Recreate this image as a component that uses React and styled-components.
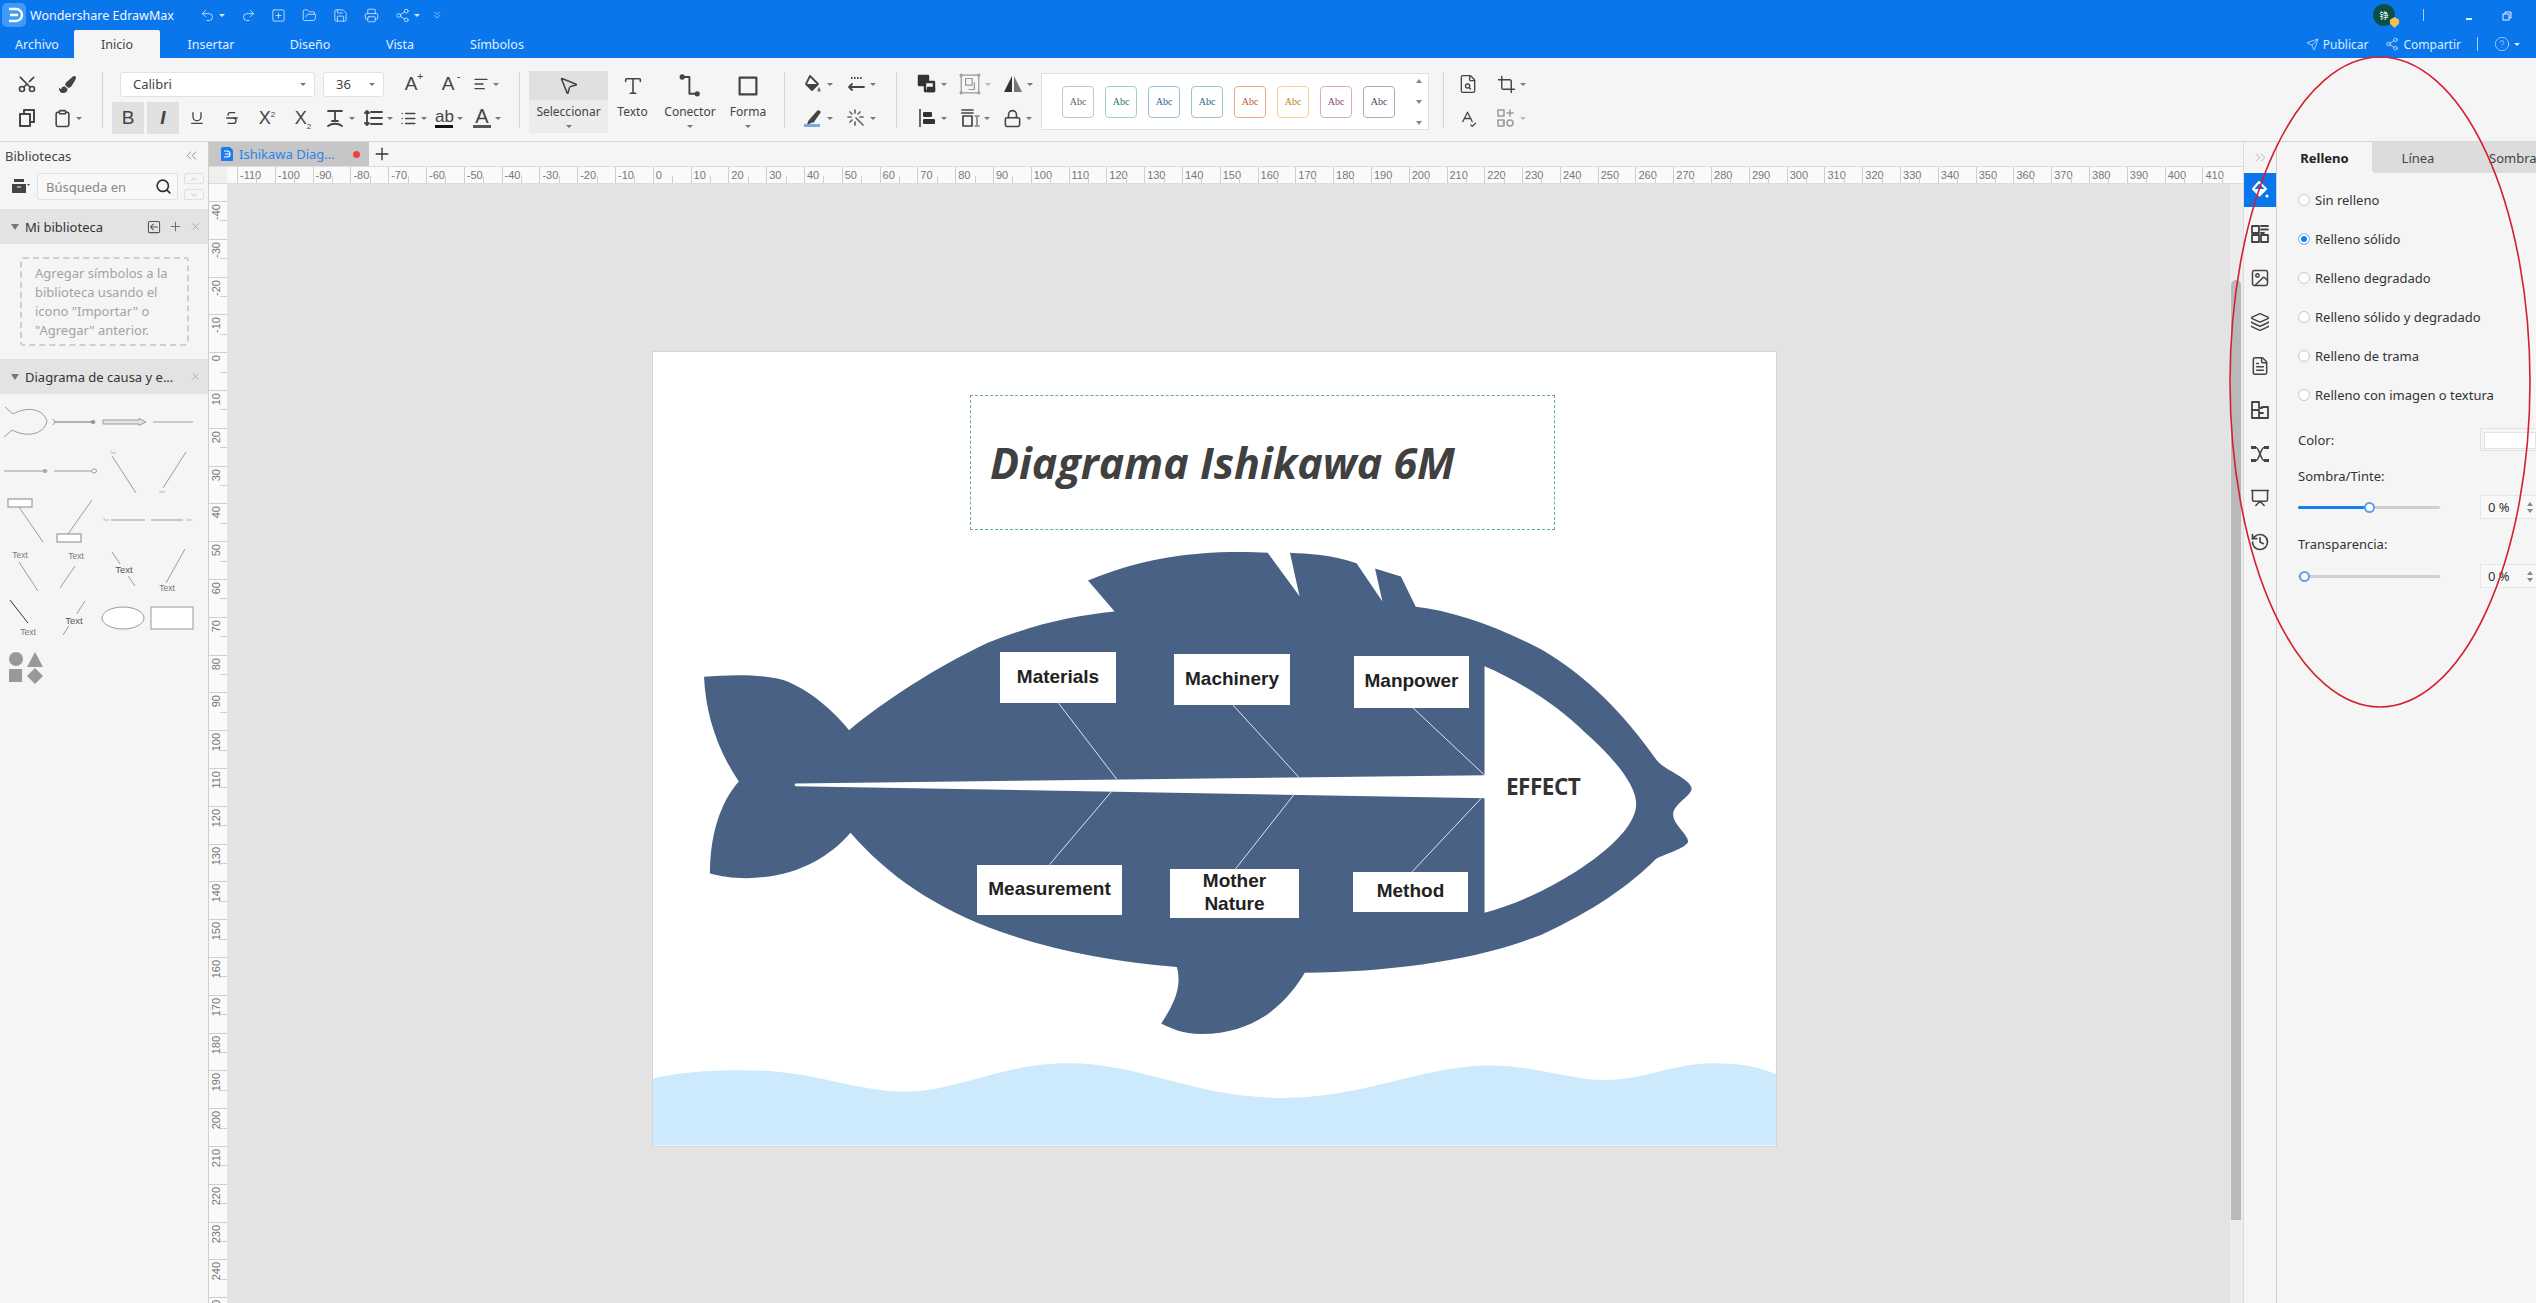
import React from "react";
import styled, { createGlobalStyle } from "styled-components";
import {
  Undo2, Redo2, SquarePlus, FolderOpen, Save, Printer, Send, Share2, CircleHelp,
  Scissors, Clipboard, AlignLeft, Underline, Strikethrough, List, MousePointer2, Type,
  Lock, FileSearch, Crop, SpellCheck, Search, ChevronUp, ChevronDown, Plus, X,
  ChevronsLeft, ChevronsRight, Image, Layers, FileText, Presentation, History, ChevronsDown,
} from "lucide-react";
import { FaPaintBrush } from "react-icons/fa";

const UI_FONT = `"Noto Sans", "Open Sans", sans-serif`;
const UNIT = 37.8; // ruler px for 10 units

const GlobalStyle = createGlobalStyle`
  html, body { margin: 0; padding: 0; height: 100%; overflow: hidden; }
  body { font-family: ${UI_FONT}; color: #333; background: #f5f5f5; }
  * { box-sizing: border-box; }
`;

const Shell = styled.div`
  position: relative;
  display: flex;
  flex-direction: column;
  width: 2536px;
  height: 1303px;
  overflow: hidden;
`;

/* ---- title bar ---- */
const TitleBar = styled.header`
  height: 58px;
  flex: none;
  background: #0a76ec;
  color: #fff;
  display: flex;
  flex-direction: column;
`;
const TitleRow = styled.div`
  height: 30px;
  display: flex;
  align-items: center;
`;
const AppLogo = styled.svg`
  width: 24px;
  height: 24px;
  margin-left: 2px;
`;
const AppName = styled.span`
  font-size: 12.5px;
  margin-left: 4px;
  width: 170px;
  color: #f2f7ff;
`;
const QuickIcons = styled.div`
  display: flex;
  align-items: center;
`;
const QuickBtn = styled.span`
  width: ${(p) => p.$w || 31}px;
  display: flex;
  align-items: center;
  justify-content: flex-start;
  gap: 4px;
  color: #d9e9fd;
`;
const CaretDown = styled.i`
  display: inline-block;
  flex: none;
  width: 0;
  height: 0;
  border-left: 3px solid transparent;
  border-right: 3px solid transparent;
  border-top: 3px solid ${(p) => p.$color || "#777"};
`;
const WindowArea = styled.div`
  margin-left: auto;
  display: flex;
  align-items: center;
`;
const AvatarWrap = styled.div`
  position: relative;
  width: 22px;
  height: 22px;
  border-radius: 50%;
  background: #0c4f45;
  font: 9px "Noto Sans CJK SC", sans-serif;
  display: flex;
  align-items: center;
  justify-content: center;
  margin-right: 28px;
`;
const AvatarBadge = styled.svg`
  position: absolute;
  right: -5px;
  bottom: -2px;
  width: 11px;
  height: 11px;
`;
const TitleDivider = styled.span`
  width: 1px;
  height: ${(p) => p.$h || 12}px;
  background: #a9cdf8;
`;
const WinBtn = styled.span`
  display: block;
  margin-left: ${(p) => p.$ml}px;
  margin-right: ${(p) => p.$mr || 0}px;
  color: #e6f1ff;
`;
const MenuRow = styled.div`
  height: 28px;
  display: flex;
  align-items: stretch;
`;
const MenuTab = styled.div`
  width: ${(p) => p.$w}px;
  display: flex;
  align-items: center;
  justify-content: center;
  font-size: 12.5px;
  border-radius: 2px 2px 0 0;
  color: ${(p) => (p.$active ? "#444" : "#e2eefd")};
  background: ${(p) => (p.$active ? "#f5f5f5" : "transparent")};
`;
const ShareArea = styled.div`
  margin-left: auto;
  display: flex;
  align-items: center;
  font-size: 12px;
  color: #dcebfd;
  padding-right: 16px;
`;
const ShareLink = styled.span`
  display: flex;
  align-items: center;
  gap: 4px;
  margin-right: ${(p) => p.$mr}px;
  margin-left: ${(p) => p.$ml || 0}px;
`;

/* ---- ribbon ---- */
const Ribbon = styled.section`
  height: 84px;
  flex: none;
  background: #f5f5f5;
  border-bottom: 1px solid #d6d6d6;
  display: flex;
  align-items: flex-start;
  padding: 9px 0 0 7px;
`;
const Divider = styled.span`
  flex: none;
  width: 1px;
  height: 56px;
  margin: 5px ${(p) => p.$r}px 0 ${(p) => p.$l}px;
  background: #d4d4d4;
`;
const ToolGrid = styled.div`
  display: grid;
  flex: none;
  grid-template-columns: ${(p) => p.$cols};
  grid-auto-rows: 34px;
`;
const Tool = styled.span`
  display: flex;
  align-items: center;
  justify-content: center;
  gap: 4px;
  height: 34px;
  width: ${(p) => (p.$w ? `${p.$w}px` : "auto")};
  flex: none;
  color: ${(p) => (p.$muted ? "#9a9a9a" : "#444")};
  font-size: 15px;
`;
const CutIcon = styled(Scissors)`
  transform: rotate(-90deg);
`;
const FontColumn = styled.div`
  width: 393px;
  flex: none;
  display: flex;
  flex-direction: column;
`;
const FontRow = styled.div`
  display: flex;
  align-items: center;
  height: 34px;
  padding-left: ${(p) => p.$pl || 0}px;
`;
const SelectBox = styled.div`
  width: ${(p) => p.$w}px;
  height: 25px;
  margin-right: 8px;
  background: #fff;
  border: 1px solid #e2e2e2;
  border-radius: 3px;
  font-size: 13px;
  color: #444;
  display: flex;
  align-items: center;
  justify-content: space-between;
  padding: 0 ${(p) => p.$pr || 8}px 0 12px;
`;
const ToggleBtn = styled.span`
  width: 32px;
  height: 32px;
  margin-right: ${(p) => p.$mr || 0}px;
  flex: none;
  background: #e0e0e0;
  display: flex;
  align-items: center;
  justify-content: center;
  color: #444;
  font: ${(p) => (p.$italic ? "italic" : "normal")} ${(p) => (p.$italic ? 700 : 400)} 19px "Liberation Sans", sans-serif;
`;
const SizeGlyph = styled.span`
  font: 400 19px "Liberation Sans", sans-serif;
  color: #444;
  position: relative;
`;
const SmallMark = styled.small`
  position: absolute;
  top: -3px;
  right: -6px;
  font-size: 11px;
`;
const ScriptX = styled.span`
  font: 400 18px "Liberation Sans", sans-serif;
  color: #444;
  & > sup, & > sub { font-size: 8px; line-height: 0; }
`;
const UnderGlyph = styled.span`
  font: 400 ${(p) => p.$size}px "Liberation Sans", sans-serif;
  line-height: 17px;
  color: #444;
  border-bottom: 3px solid ${(p) => p.$bar};
  display: block;
  width: 18px;
  text-align: center;
`;
const BigTools = styled.div`
  display: flex;
  flex: none;
  margin-top: 4px;
`;
const BigTool = styled.div`
  width: ${(p) => p.$w}px;
  height: 62px;
  display: flex;
  flex-direction: column;
  align-items: center;
  font-size: 12px;
  color: #444;
  background: ${(p) => (p.$active ? "#ececec" : "transparent")};
`;
const BigIcon = styled.span`
  width: 100%;
  height: 29px;
  display: flex;
  align-items: center;
  justify-content: center;
  background: ${(p) => (p.$active ? "#e0e0e0" : "transparent")};
`;
const BigLabel = styled.span`
  margin-top: 3px;
  line-height: 18px;
  margin-bottom: 4px;
`;
const StyleBox = styled.div`
  flex: none;
  width: 388px;
  height: 57px;
  margin: 6px 0 0 2px;
  background: #fff;
  border: 1px solid #e0e0e0;
  display: flex;
  align-items: center;
  padding-left: 20px;
  gap: 11px;
  position: relative;
`;
const StyleCard = styled.span`
  width: 32px;
  height: 32px;
  border: 1px solid ${(p) => p.$line};
  border-radius: 4px;
  display: flex;
  align-items: center;
  justify-content: center;
  font: 10px "Liberation Serif", serif;
  color: ${(p) => p.$ink};
`;
const StyleArrows = styled.span`
  position: absolute;
  right: 6px;
  top: 5px;
  bottom: 4px;
  display: flex;
  flex-direction: column;
  justify-content: space-between;
  align-items: center;
`;

/* ---- body ---- */
const Body = styled.div`
  flex: 1;
  display: flex;
  min-height: 0;
`;
const Library = styled.aside`
  width: 209px;
  flex: none;
  background: #f5f5f5;
  border-right: 1px solid #cfcfcf;
  display: flex;
  flex-direction: column;
`;
const LibTitle = styled.div`
  height: 27px;
  padding: 0 8px 0 5px;
  font-size: 13px;
  color: #444;
  display: flex;
  align-items: center;
  justify-content: space-between;
`;
const SearchRow = styled.div`
  display: flex;
  align-items: flex-start;
  height: 40px;
  padding: 4px 0 0 12px;
`;
const Cabinet = styled.svg`
  width: 18px;
  height: 16px;
  margin-top: 5px;
`;
const SearchBox = styled.div`
  width: 141px;
  height: 27px;
  margin-left: 7px;
  background: #f8f8f8;
  border: 1px solid #e2e2e2;
  border-radius: 2px;
  font-size: 13px;
  color: #888;
  display: flex;
  align-items: center;
  justify-content: space-between;
  padding: 0 5px 0 8px;
`;
const Steppers = styled.div`
  margin-left: 6px;
  display: flex;
  flex-direction: column;
  gap: 5px;
`;
const StepBtn = styled.span`
  width: 20px;
  height: 11px;
  border: 1px solid #e0e0e0;
  border-radius: 2px;
  color: #888;
  display: flex;
  align-items: center;
  justify-content: center;
`;
const LibHeader = styled.div`
  height: 35px;
  flex: none;
  background: #e3e3e3;
  display: flex;
  align-items: center;
  padding: 0 7px 0 11px;
  font-size: 13px;
  color: #333;
`;
const SectionCaret = styled.i`
  flex: none;
  width: 0;
  height: 0;
  border-left: 4px solid transparent;
  border-right: 4px solid transparent;
  border-top: 6px solid #777;
`;
const HeaderText = styled.span`
  margin-left: 6px;
  flex: 1;
  white-space: nowrap;
`;
const HeaderIcons = styled.span`
  display: flex;
  align-items: center;
  gap: 7px;
  color: #555;
`;
const DashedNote = styled.div`
  width: 169px;
  height: 89px;
  margin: 13px 0 13px 20px;
  border: 2px dashed #cfcfcf;
  border-radius: 3px;
  padding: 5px 0 0 13px;
  font-size: 13px;
  line-height: 19px;
  color: #a3a3a3;
`;
const ThumbGrid = styled.div`
  display: grid;
  grid-template-columns: repeat(4, 49px);
  grid-auto-rows: 49px;
  padding: 4px 0 0 3px;
`;
const Thumb = styled.svg`
  width: 49px;
  height: 49px;
  overflow: visible;
`;

const Workspace = styled.main`
  flex: 1;
  min-width: 0;
  display: flex;
  flex-direction: column;
`;
const DocTabs = styled.div`
  height: 25px;
  flex: none;
  display: flex;
  align-items: center;
  border-bottom: 1px solid #dcdcdc;
`;
const DocTab = styled.div`
  width: 160px;
  height: 24px;
  background: #c6c6c6;
  display: flex;
  align-items: center;
  padding-left: 12px;
  font-size: 13px;
  color: #2b84e6;
  gap: 6px;
`;
const DirtyDot = styled.span`
  width: 7px;
  height: 7px;
  border-radius: 50%;
  margin-left: 12px;
  background: #ec4141;
`;
const AddTab = styled.span`
  margin-left: 3px;
  display: flex;
  color: #333;
`;
const RulerRow = styled.div`
  height: 17px;
  flex: none;
  display: flex;
`;
const RulerCorner = styled.div`
  width: 18px;
  flex: none;
  background: #efefef;
  border-bottom: 1px solid #dcdcdc;
`;
const HRuler = styled.div`
  flex: 1;
  min-width: 0;
  display: flex;
  overflow: hidden;
  padding-left: 10px;
  background: #fafafa;
  border-bottom: 1px solid #dcdcdc;
`;
const HTick = styled.span`
  position: relative;
  flex: none;
  width: ${UNIT}px;
  border-left: 1px solid #cfcfcf;
  padding-left: 2px;
  font: 11px/16px "Liberation Sans", sans-serif;
  color: #777;
  &::after {
    content: "";
    position: absolute;
    left: 50%;
    bottom: 0;
    height: 7px;
    border-left: 1px solid #cfcfcf;
  }
`;
const CanvasRow = styled.div`
  flex: 1;
  min-height: 0;
  display: flex;
`;
const VRuler = styled.div`
  width: 18px;
  flex: none;
  display: flex;
  flex-direction: column;
  overflow: hidden;
  padding-top: 17px;
  background: #fafafa;
`;
const VTick = styled.span`
  position: relative;
  flex: none;
  height: ${UNIT}px;
  border-top: 1px solid #cfcfcf;
  &::after {
    content: "";
    position: absolute;
    right: 0;
    top: 50%;
    width: 7px;
    border-top: 1px solid #cfcfcf;
  }
`;
const VTickText = styled.span`
  position: absolute;
  left: 1px;
  top: 2px;
  writing-mode: vertical-rl;
  transform: rotate(180deg);
  font: 11px/12px "Liberation Sans", sans-serif;
  color: #777;
`;
const Canvas = styled.div`
  flex: 1;
  min-width: 0;
  background: #e3e3e3;
  padding: 168px 0 0 426px;
  overflow: hidden;
`;
const Sheet = styled.div`
  position: relative;
  width: 1123px;
  height: 794px;
  background: #fff;
  box-shadow: 0 0 0 1px #d6d6d6;
`;
const SheetArt = styled.svg`
  position: absolute;
  inset: 0;
  width: 100%;
  height: 100%;
`;
const TitleFrame = styled.div`
  position: absolute;
  left: 317px;
  top: 43px;
  width: 585px;
  height: 135px;
  border: 1px dashed #62a6b8;
  display: flex;
  align-items: center;
  padding: 0 0 1px 19px;
  font: italic 700 43px "Open Sans", sans-serif;
  color: #404040;
  white-space: nowrap;
`;
const CauseBox = styled.div`
  position: absolute;
  left: ${(p) => p.$x}px;
  top: ${(p) => p.$y}px;
  width: ${(p) => p.$w}px;
  height: ${(p) => p.$h}px;
  background: #fff;
  display: flex;
  align-items: center;
  justify-content: center;
  text-align: center;
  font: 700 19px/23px "Liberation Sans", sans-serif;
  color: #222;
  padding-bottom: 3px;
`;
const EffectLabel = styled.div`
  position: absolute;
  left: 853px;
  top: 421px;
  font: 700 22.5px/28px "Open Sans", sans-serif;
  color: #333;
  letter-spacing: -0.5px;
`;
const ScrollTrack = styled.div`
  width: 13px;
  flex: none;
  background: #ececec;
  padding: 96px 2px 83px 1px;
  display: flex;
`;
const ScrollThumb = styled.div`
  flex: 1;
  background: #b9b9b9;
  border-radius: 5px 5px 0 0;
`;

/* ---- right side ---- */
const IconStrip = styled.nav`
  width: 34px;
  flex: none;
  background: #f5f5f5;
  border-right: 1px solid #cfcfcf;
  border-left: 1px solid #dcdcdc;
  display: flex;
  flex-direction: column;
  align-items: center;
`;
const StripTop = styled.div`
  height: 31px;
  display: flex;
  align-items: center;
  color: #999;
`;
const StripBtn = styled.span`
  width: 100%;
  height: ${(p) => (p.$active ? 34 : 44)}px;
  margin-bottom: ${(p) => (p.$active ? 5 : 0)}px;
  display: flex;
  align-items: center;
  justify-content: center;
  background: ${(p) => (p.$active ? "#0a76ec" : "transparent")};
  color: ${(p) => (p.$active ? "#fff" : "#444")};
`;
const Props = styled.aside`
  width: 259px;
  flex: none;
  background: #f5f5f5;
  overflow: hidden;
`;
const PropTabs = styled.div`
  display: flex;
  height: 31px;
`;
const PropTab = styled.div`
  flex: none;
  width: ${(p) => p.$w}px;
  padding-left: ${(p) => p.$pl || 0}px;
  font-size: 13px;
  font-weight: ${(p) => (p.$active ? 700 : 400)};
  color: ${(p) => (p.$active ? "#222" : "#444")};
  background: ${(p) => (p.$active ? "#f5f5f5" : "#dcdcdc")};
  border-bottom-left-radius: ${(p) => (p.$first ? 4 : 0)}px;
  display: flex;
  align-items: center;
  justify-content: ${(p) => (p.$pl ? "flex-start" : "center")};
  overflow: hidden;
`;
const FillList = styled.div`
  display: flex;
  flex-direction: column;
  padding: 7px 0 0 21px;
`;
const FillOption = styled.div`
  height: 39px;
  display: flex;
  align-items: center;
  gap: 5px;
  font-size: 13px;
  color: #333;
`;
const Radio = styled.span`
  width: 12px;
  height: 12px;
  border-radius: 50%;
  flex: none;
  background: ${(p) => (p.$on ? "#1b7ef0" : "#fff")};
  border: 1px solid ${(p) => (p.$on ? "#9cc8f8" : "#c8c8c8")};
  box-shadow: ${(p) => (p.$on ? "inset 0 0 0 2px #fff" : "none")};
`;
const FieldRow = styled.div`
  display: flex;
  align-items: center;
  height: ${(p) => p.$h}px;
  margin-top: ${(p) => p.$mt || 0}px;
  padding-left: 21px;
  font-size: 13px;
  color: #333;
`;
const ColorWell = styled.div`
  margin-left: auto;
  width: 56px;
  height: 23px;
  flex: none;
  border: 1px solid #e2e2e2;
  border-right: 0;
  padding: 3px 0 3px 3px;
  border-radius: 2px;
  &::after {
    content: "";
    display: block;
    height: 100%;
    background: #fff;
    border: 1px solid #e2e2e2;
  }
`;
const SliderTrack = styled.div`
  position: relative;
  width: 142px;
  height: 3px;
  background: #cfcfcf;
  border-radius: 2px;
`;
const SliderFill = styled.div`
  width: ${(p) => p.$at}px;
  height: 100%;
  background: #1b7ef0;
  border-radius: 2px;
`;
const SliderThumb = styled.span`
  position: absolute;
  left: ${(p) => p.$at}px;
  top: -4px;
  width: 11px;
  height: 11px;
  margin-left: -5px;
  border-radius: 50%;
  background: #fff;
  border: 2px solid #5aa2f3;
`;
const PercentBox = styled.div`
  margin-left: 40px;
  width: 56px;
  height: 24px;
  flex: none;
  border: 1px solid #e6e6e6;
  border-right: 0;
  font-size: 13px;
  padding-left: 7px;
  display: flex;
  align-items: center;
  gap: 17px;
  background: #f8f8f8;
`;
const Spinner = styled.span`
  display: flex;
  flex-direction: column;
  gap: 3px;
`;
const SpinUp = styled.i`
  display: block;
  width: 0;
  height: 0;
  border-left: 3px solid transparent;
  border-right: 3px solid transparent;
  border-bottom: 4px solid #888;
`;
const SpinDown = styled(SpinUp)`
  transform: rotate(180deg);
`;
const Annotation = styled.svg`
  position: absolute;
  left: 2225px;
  top: 52px;
  width: 311px;
  height: 662px;
  pointer-events: none;
`;

const Ico = ({ children, size = 20, sw = 2, color = "#444", fill = "none" }) => (
  <svg width={size} height={size} viewBox="0 0 20 20" fill={fill} stroke={color} strokeWidth={sw} strokeLinecap="round" strokeLinejoin="round">
    {children}
  </svg>
);

const CopyIcon = () => (
  <Ico size={20}>
    <rect x="3" y="6" width="10" height="12" />
    <path d="M7 6V2h10v12h-4" />
  </Ico>
);
const TextShapeIcon = () => (
  <Ico size={20} sw={1.8}>
    <path d="M3 3h14M10 3v10M7 13h6M3 18c4-3 10-3 14 0" />
  </Ico>
);
const LineSpacingIcon = () => (
  <Ico size={20} sw={1.8}>
    <path d="M8 4h11M8 10h11M8 16h11M4 3v14M2 5l2-2 2 2M2 15l2 2 2-2" />
  </Ico>
);
const ConnectorIcon = () => (
  <Ico size={24} sw={1.6}>
    <path d="M4.5 2.5H9.5V16.5H15" />
    <circle cx="3.5" cy="2.5" r="1.4" fill="#444" />
    <circle cx="16" cy="16.5" r="1.4" fill="#444" />
  </Ico>
);
const ShapeIcon = () => (
  <Ico size={24} sw={1.8}>
    <rect x="3" y="3" width="14" height="14" />
  </Ico>
);
const BucketIcon = () => (
  <Ico size={20} sw={1.8}>
    <path d="M7 2l8 8-6 6-6-6z" fill="#fff" />
    <path d="M3 10h12l-6 6z" fill="#444" stroke="none" />
    <path d="M16 13c1 1.6 1.6 2.4 1.6 3.2a1.6 1.6 0 1 1-3.2 0c0-.8.6-1.6 1.6-3.2z" fill="#777" stroke="none" />
  </Ico>
);
const LineStyleIcon = () => (
  <Ico size={20} sw={1.8}>
    <path d="M5 4h12" strokeDasharray="1.5 1.5" strokeLinecap="butt" />
    <path d="M3 13h15M3 13l3-3M3 13l3 3" />
  </Ico>
);
const PenIcon = () => (
  <Ico size={20} sw={1.6}>
    <path d="M7 12L15 3l2 1-7 10z" fill="#444" />
    <path d="M6 13l2 1-3 2z" fill="#444" />
    <rect x="1" y="16" width="16" height="3" fill="#7ca9dc" stroke="none" />
  </Ico>
);
const SparkleIcon = () => (
  <Ico size={20} sw={1.7} color="#666">
    <path d="M9 2v3M9 14v3M2 9h3M14 9h3M4 4l2 2M14 4l-2 2M4 14l2-2M10 10l7 7" />
  </Ico>
);
const ArrangeIcon = () => (
  <Ico size={20} sw={2.4} color="#333">
    <rect x="2" y="2" width="9" height="9" fill="#333" />
    <rect x="8" y="8" width="9" height="9" fill="#f5f5f5" />
    <path d="M11 14h6v3h-6z" fill="#333" />
  </Ico>
);
const GroupIcon = () => (
  <Ico size={22} sw={1.1} color="#999">
    <rect x="2" y="2" width="16" height="16" />
    <circle cx="2" cy="2" r="1" fill="#f5f5f5" />
    <circle cx="18" cy="2" r="1" fill="#f5f5f5" />
    <circle cx="2" cy="18" r="1" fill="#f5f5f5" />
    <circle cx="18" cy="18" r="1" fill="#f5f5f5" />
    <rect x="6" y="5" width="6" height="6" />
    <path d="M14 9v6h-5" />
  </Ico>
);
const FlipIcon = () => (
  <svg width="20" height="20" viewBox="0 0 20 20">
    <path d="M9 2v16H1z" fill="#333" />
    <path d="M11 2v16h8z" fill="#777" />
  </svg>
);
const AlignObjIcon = () => (
  <svg width="20" height="20" viewBox="0 0 20 20">
    <rect x="2" y="1" width="2" height="18" fill="#666" />
    <rect x="6" y="4" width="9" height="5" rx="1" fill="#333" />
    <rect x="6" y="11" width="12" height="5" rx="1" fill="#333" />
  </svg>
);
const DistributeIcon = () => (
  <Ico size={20} sw={1.7}>
    <path d="M2 2h11M2 5h11" />
    <rect x="3" y="8" width="9" height="10" />
    <path d="M17 8v10M15 8h4M15 18h4" stroke="#888" />
  </Ico>
);
const ArrangeGrayIcon = () => (
  <Ico size={20} sw={1.5} color="#999">
    <rect x="2" y="2" width="6" height="6" />
    <rect x="2" y="12" width="6" height="6" />
    <circle cx="14" cy="15" r="3" />
    <path d="M14 2v6M11 5h6M8 15h-1" />
  </Ico>
);
const FillStripIcon = () => (
  <Ico size={20} sw={2} color="#fff">
    <path d="M9 2l7 7-6.5 6.5L3 9z" fill="none" />
    <path d="M3 9h13l-6.5 6.5z" fill="#fff" stroke="none" />
    <circle cx="17" cy="16" r="1.6" fill="#fff" stroke="none" />
  </Ico>
);
const GridStripIcon = () => (
  <Ico size={20} sw={1.8}>
    <rect x="2" y="2" width="7" height="7" />
    <rect x="11" y="11" width="7" height="7" />
    <rect x="2" y="11" width="7" height="7" />
    <path d="M11 2h7M11 5.5h7M11 9h3" />
  </Ico>
);
const PuzzleStripIcon = () => (
  <Ico size={20} sw={1.8}>
    <path d="M2 2h7v6h3v-1h6v11H2z" />
    <path d="M2 10h7v8M9 13h4" />
  </Ico>
);
const NetworkStripIcon = () => (
  <svg width="20" height="20" viewBox="0 0 20 20" fill="#444">
    <rect x="1" y="2" width="5" height="3" />
    <rect x="14" y="2" width="5" height="3" />
    <rect x="1" y="15" width="5" height="3" />
    <rect x="14" y="15" width="5" height="3" />
    <path d="M6 3.5c3 0 5 13 8 13M14 3.5c-3 0-5 13-8 13" fill="none" stroke="#444" strokeWidth="1.6" />
  </svg>
);
const ImportIcon = () => (
  <Ico size={14} sw={1.5} color="#555">
    <rect x="2" y="2" width="16" height="16" rx="2" />
    <path d="M15 10H6M9 6l-4 4 4 4" />
  </Ico>
);

const Caret = ({ color }) => <CaretDown $color={color} />;

const hTicks = Array.from({ length: 53 }, (_, i) => -110 + i * 10);
const vTicks = Array.from({ length: 30 }, (_, i) => -40 + i * 10);

const causes = [
  { label: "Materials", x: 347, y: 300, w: 116, h: 51 },
  { label: "Machinery", x: 521, y: 302, w: 116, h: 51 },
  { label: "Manpower", x: 701, y: 304, w: 115, h: 52 },
  { label: "Measurement", x: 324, y: 513, w: 145, h: 50 },
  { label: <>Mother<br />Nature</>, x: 517, y: 517, w: 129, h: 49 },
  { label: "Method", x: 700, y: 520, w: 115, h: 40 },
];

const ribs = [
  "M567 692L646 838", "M803 696L892 834", "M1046 701L1143 830",
  "M639 861L555 1001", "M885 868L806 1010", "M1138 875L1045 1015",
];

const styleCards = [
  ["#c4c4c4", "#666"], ["#9ad3c6", "#1d7a66"], ["#9dbfdc", "#2a6496"], ["#9cc3d2", "#23697f"],
  ["#eaa98a", "#b4592a"], ["#f2cf93", "#b88418"], ["#d9a9c8", "#8a3f75"], ["#a9afb8", "#3f4a5a"],
];

const fillOptions = [
  "Sin relleno", "Relleno sólido", "Relleno degradado",
  "Relleno sólido y degradado", "Relleno de trama", "Relleno con imagen o textura",
];

const LINE = { stroke: "#9b9b9b", strokeWidth: 1, fill: "none" };
const TINY = { fontFamily: "Liberation Sans", fontSize: 3, fill: "#999" };
const SMALL = { fontFamily: "Liberation Sans", fontSize: 8.5, fill: "#777", textAnchor: "middle" };

const thumbs = [
  <path {...LINE} d="M2 9L10 16C22 9 40 9 44 23.5C40 38 22 39 9 32L1 39" />,
  <g><path {...LINE} strokeWidth="1.5" d="M2 24H40" /><path {...LINE} d="M1 21L3 24L1 27" /><ellipse cx="41" cy="24" rx="2.5" ry="2" fill="#999" /></g>,
  <g><path {...LINE} d="M2 22H38V20.5L45 24L38 27.5V26H2z" fill="#e4e4e4" /></g>,
  <path {...LINE} d="M3 24H43" />,
  <g><path {...LINE} d="M1 24H40" /><ellipse cx="42" cy="24" rx="2.5" ry="2" fill="#aaa" /></g>,
  <g><path {...LINE} d="M2 24H40" /><ellipse cx="42" cy="24" rx="2.5" ry="2" fill="#fff" stroke="#999" /></g>,
  <g><path {...LINE} d="M11 9L35 46" /><text x="9" y="7" {...TINY}>Text</text></g>,
  <g><path {...LINE} d="M36 5L13 41" /><text x="9" y="46" {...TINY}>Text</text></g>,
  <g><rect x="5" y="3" width="24" height="8" fill="#fff" stroke="#888" /><path {...LINE} d="M16 11L40 46" /></g>,
  <g><rect x="5" y="38" width="24" height="8" fill="#fff" stroke="#888" /><path {...LINE} d="M40 4L16 38" /></g>,
  <g><text x="2" y="25" {...TINY}>Text</text><path {...LINE} d="M10 24H44" /></g>,
  <g><path {...LINE} d="M1 24H33" /><text x="36" y="25" {...TINY}>Text</text></g>,
  <g><text x="17" y="13" {...SMALL}>Text</text><path {...LINE} d="M16 17L35 46" /></g>,
  <g><text x="24" y="14" {...SMALL}>Text</text><path {...LINE} d="M23 21L8 43" /></g>,
  <g><path {...LINE} d="M11 7L34 41" /><rect x="12" y="19" width="22" height="12" fill="#f5f5f5" /><text x="23" y="28" {...SMALL} fill="#555" fontSize="9.5">Text</text></g>,
  <g><path {...LINE} d="M35 4L16 38" /><text x="17" y="46" {...SMALL}>Text</text></g>,
  <g><path d="M7 6L25 29" stroke="#333" strokeWidth="1" /><text x="25" y="41" {...SMALL}>Text</text></g>,
  <g><path {...LINE} d="M33 7L11 41" /><rect x="10" y="20" width="24" height="12" fill="#f5f5f5" /><text x="22" y="30" {...SMALL} fill="#555" fontSize="9.5">Text</text></g>,
  <ellipse cx="22" cy="24" rx="21" ry="11" fill="#fff" stroke="#999" />,
  <rect x="1" y="13" width="42" height="22" fill="#fff" stroke="#999" />,
  <g fill="#999"><circle cx="13" cy="16" r="7" /><path d="M32 9L40 24H24z" /><rect x="6" y="26" width="13" height="13" /><path d="M32 25L40 33L32 41L24 33z" /></g>,
];

const FishDrawing = () => (
  <SheetArt viewBox="19 21 1518 1518" preserveAspectRatio="none">
    <path
      fill="#cde9fc"
      d="M19 1410C60 1395 120 1392 170 1395C240 1400 300 1435 360 1435C430 1435 490 1381 580 1381C680 1381 750 1447 870 1447C980 1447 1060 1385 1150 1385C1210 1385 1260 1413 1305 1413C1360 1413 1400 1381 1450 1381C1490 1381 1515 1388 1537 1402L1537 1538L19 1538Z"
    />
    <path
      fill="#486185"
      d="M88 642C120 638 165 636 195 648C230 665 265 710 284 744C330 690 400 625 470 578C540 538 590 525 643 517L607 458C650 432 700 412 760 406C790 403 825 403 850 405L893 488L880 405C905 407 935 408 970 425L1005 498L995 435L1030 450L1050 508C1100 516 1160 545 1220 590C1280 640 1330 710 1375 800C1385 820 1420 835 1423 855C1423 870 1398 885 1398 905C1398 925 1420 945 1418 958C1415 970 1385 982 1375 990C1340 1040 1290 1090 1220 1135C1130 1185 1020 1205 900 1208C880 1255 840 1325 760 1325C735 1325 720 1315 706 1305C722 1270 735 1235 727 1197C640 1187 560 1165 490 1130C400 1085 335 1020 286 940C255 990 210 1026 145 1027C125 1027 110 1023 96 1018C96 950 108 885 135 842C105 780 90 710 88 642Z"
    />
    <path
      fill="#fff"
      d="M1143 622C1190 650 1240 695 1280 750C1320 800 1348 850 1348 885C1348 940 1280 1010 1215 1055C1190 1072 1165 1085 1143 1093Z"
    />
    <path fill="#fff" d="M212 846L1145 830L1145 874L212 851Q209 848 212 846Z" />
    {ribs.map((d) => (
      <path key={d} d={d} stroke="#dfe5ee" strokeWidth="1" fill="none" vectorEffect="non-scaling-stroke" />
    ))}
  </SheetArt>
);

const App = () => (
  <Shell>
    <GlobalStyle />
    <TitleBar>
      <TitleRow>
        <AppLogo viewBox="0 0 24 24">
          <rect width="24" height="24" rx="5" fill="#3f9bf5" />
          <path d="M7 6h7a6 6 0 0 1 0 12H7M8 12h8" fill="none" stroke="#fff" strokeWidth="2.4" />
        </AppLogo>
        <AppName>Wondershare EdrawMax</AppName>
        <QuickIcons>
          <QuickBtn $w={41}><Undo2 size={15} strokeWidth={1.3} /><Caret color="#d9e9fd" /></QuickBtn>
          <QuickBtn $w={30}><Redo2 size={15} strokeWidth={1.3} /></QuickBtn>
          <QuickBtn><SquarePlus size={15} strokeWidth={1.3} /></QuickBtn>
          <QuickBtn><FolderOpen size={15} strokeWidth={1.3} /></QuickBtn>
          <QuickBtn><Save size={15} strokeWidth={1.3} /></QuickBtn>
          <QuickBtn><Printer size={15} strokeWidth={1.3} /></QuickBtn>
          <QuickBtn $w={36}><Share2 size={15} strokeWidth={1.3} /><Caret color="#d9e9fd" /></QuickBtn>
          <QuickBtn><ChevronsDown size={12} strokeWidth={1.3} /></QuickBtn>
        </QuickIcons>
        <WindowArea>
          <AvatarWrap>
            铮
            <AvatarBadge viewBox="0 0 12 12"><path d="M6 0l5 3v4l-5 5-5-5V3z" fill="#f2c14e" /></AvatarBadge>
          </AvatarWrap>
          <TitleDivider />
          <WinBtn $ml={42}><svg width="6" height="3"><rect width="6" height="2" fill="#e6f1ff" /></svg></WinBtn>
          <WinBtn $ml={30} $mr={24}><svg width="10" height="10" viewBox="0 0 10 10" fill="none" stroke="#e6f1ff"><rect x="1" y="3" width="6" height="6" /><path d="M3 3V1h6v6H7" /></svg></WinBtn>
        </WindowArea>
      </TitleRow>
      <MenuRow>
        <MenuTab $w={74}>Archivo</MenuTab>
        <MenuTab $w={86} $active>Inicio</MenuTab>
        <MenuTab $w={102}>Insertar</MenuTab>
        <MenuTab $w={96}>Diseño</MenuTab>
        <MenuTab $w={84}>Vista</MenuTab>
        <MenuTab $w={110}>Símbolos</MenuTab>
        <ShareArea>
          <ShareLink $mr={17}><Send size={13} strokeWidth={1.3} />Publicar</ShareLink>
          <ShareLink $mr={16}><Share2 size={14} strokeWidth={1.3} />Compartir</ShareLink>
          <TitleDivider $h={14} />
          <ShareLink $mr={0} $ml={16}><CircleHelp size={16} strokeWidth={1} /><Caret color="#dcebfd" /></ShareLink>
        </ShareArea>
      </MenuRow>
    </TitleBar>

    <Ribbon>
      <ToolGrid $cols="40px 40px">
        <Tool><CutIcon size={20} /></Tool>
        <Tool><FaPaintBrush size={17} /></Tool>
        <Tool><CopyIcon /></Tool>
        <Tool><Clipboard size={19} /><Caret /></Tool>
      </ToolGrid>
      <Divider $l={15} $r={9} />
      <FontColumn>
        <FontRow $pl={8}>
          <SelectBox $w={195}>Calibri<Caret /></SelectBox>
          <SelectBox $w={61}>36<Caret /></SelectBox>
          <Tool $w={38}><SizeGlyph>A<SmallMark>+</SmallMark></SizeGlyph></Tool>
          <Tool $w={36}><SizeGlyph>A<SmallMark>-</SmallMark></SizeGlyph></Tool>
          <Tool $w={39}><AlignLeft size={16} /><Caret /></Tool>
        </FontRow>
        <FontRow>
          <ToggleBtn $mr={3}>B</ToggleBtn>
          <ToggleBtn $italic>I</ToggleBtn>
          <Tool $w={36}><Underline size={16} /></Tool>
          <Tool $w={34}><Strikethrough size={16} /></Tool>
          <Tool $w={36}><ScriptX>X<sup>2</sup></ScriptX></Tool>
          <Tool $w={36}><ScriptX>X<sub>2</sub></ScriptX></Tool>
          <Tool $w={38}><TextShapeIcon /><Caret /></Tool>
          <Tool $w={38}><LineSpacingIcon /><Caret /></Tool>
          <Tool $w={32}><List size={17} /><Caret /></Tool>
          <Tool $w={40}><UnderGlyph $size={17} $bar="#111">ab</UnderGlyph><Caret /></Tool>
          <Tool $w={36}><UnderGlyph $size={20} $bar="#555">A</UnderGlyph><Caret /></Tool>
        </FontRow>
      </FontColumn>
      <Divider $l={14} $r={9} />
      <BigTools>
        <BigTool $w={79} $active>
          <BigIcon $active><MousePointer2 size={21} strokeWidth={1.7} /></BigIcon>
          <BigLabel>Seleccionar</BigLabel>
          <Caret />
        </BigTool>
        <BigTool $w={49}>
          <BigIcon><Type size={22} strokeWidth={1.7} /></BigIcon>
          <BigLabel>Texto</BigLabel>
        </BigTool>
        <BigTool $w={66}>
          <BigIcon><ConnectorIcon /></BigIcon>
          <BigLabel>Conector</BigLabel>
          <Caret />
        </BigTool>
        <BigTool $w={50}>
          <BigIcon><ShapeIcon /></BigIcon>
          <BigLabel>Forma</BigLabel>
          <Caret />
        </BigTool>
      </BigTools>
      <Divider $l={11} $r={11} />
      <ToolGrid $cols="43px 43px">
        <Tool><BucketIcon /><Caret /></Tool>
        <Tool><LineStyleIcon /><Caret /></Tool>
        <Tool><PenIcon /><Caret /></Tool>
        <Tool><SparkleIcon /><Caret /></Tool>
      </ToolGrid>
      <Divider $l={14} $r={13} />
      <ToolGrid $cols="43px 43px 43px">
        <Tool><ArrangeIcon /><Caret /></Tool>
        <Tool><GroupIcon /><Caret color="#bbb" /></Tool>
        <Tool><FlipIcon /><Caret /></Tool>
        <Tool><AlignObjIcon /><Caret /></Tool>
        <Tool><DistributeIcon /><Caret /></Tool>
        <Tool><Lock size={19} /><Caret /></Tool>
      </ToolGrid>
      <StyleBox>
        {styleCards.map(([line, ink], i) => (
          <StyleCard key={i} $line={line} $ink={ink}>Abc</StyleCard>
        ))}
        <StyleArrows>
          <SpinUp />
          <SpinDown />
          <SpinDown />
        </StyleArrows>
      </StyleBox>
      <Divider $l={14} $r={5} />
      <ToolGrid $cols="37px 50px">
        <Tool><FileSearch size={20} strokeWidth={1.6} /></Tool>
        <Tool><Crop size={19} strokeWidth={1.8} /><Caret /></Tool>
        <Tool><SpellCheck size={19} strokeWidth={1.6} /></Tool>
        <Tool><ArrangeGrayIcon /><Caret color="#bbb" /></Tool>
      </ToolGrid>
    </Ribbon>

    <Body>
      <Library>
        <LibTitle>
          Bibliotecas
          <ChevronsLeft size={17} strokeWidth={1} color="#666" />
        </LibTitle>
        <SearchRow>
          <Cabinet viewBox="0 0 18 16">
            <path d="M2 1h10v3H2zM0 6h14v9H0z" fill="#444" />
            <path d="M5 9h4" stroke="#f5f5f5" />
            <path d="M15 6h3l-1.5 2z" fill="#555" />
          </Cabinet>
          <SearchBox>Búsqueda en<Search size={17} strokeWidth={2.4} color="#333" /></SearchBox>
          <Steppers>
            <StepBtn><ChevronUp size={10} strokeWidth={1} /></StepBtn>
            <StepBtn><ChevronDown size={10} strokeWidth={1} /></StepBtn>
          </Steppers>
        </SearchRow>
        <LibHeader>
          <SectionCaret />
          <HeaderText>Mi biblioteca</HeaderText>
          <HeaderIcons>
            <ImportIcon />
            <Plus size={15} strokeWidth={1.3} />
            <X size={11} strokeWidth={1.2} color="#888" />
          </HeaderIcons>
        </LibHeader>
        <DashedNote>
          Agregar símbolos a la biblioteca usando el icono "Importar" o "Agregar" anterior.
        </DashedNote>
        <LibHeader>
          <SectionCaret />
          <HeaderText>Diagrama de causa y e...</HeaderText>
          <HeaderIcons><X size={11} strokeWidth={1.2} color="#888" /></HeaderIcons>
        </LibHeader>
        <ThumbGrid>
          {thumbs.map((t, i) => (
            <Thumb key={i} viewBox="0 0 49 49">{t}</Thumb>
          ))}
        </ThumbGrid>
      </Library>

      <Workspace>
        <DocTabs>
          <DocTab>
            <svg width="12" height="14" viewBox="0 0 12 14">
              <path d="M0 1.5A1.5 1.5 0 0 1 1.5 0H9l3 3v11H0z" fill="#1a7cf0" />
              <path d="M3 4h3a3 3 0 0 1 0 6H3M4 7h4" fill="none" stroke="#fff" strokeWidth="1.2" />
            </svg>
            Ishikawa Diag...
            <DirtyDot />
          </DocTab>
          <AddTab><Plus size={20} strokeWidth={1.6} /></AddTab>
        </DocTabs>
        <RulerRow>
          <RulerCorner />
          <HRuler>
            {hTicks.map((n) => <HTick key={n}>{n}</HTick>)}
          </HRuler>
        </RulerRow>
        <CanvasRow>
          <VRuler>
            {vTicks.map((n) => (
              <VTick key={n}><VTickText>{n}</VTickText></VTick>
            ))}
          </VRuler>
          <Canvas>
            <Sheet>
              <FishDrawing />
              <TitleFrame>Diagrama Ishikawa 6M</TitleFrame>
              {causes.map((c, i) => (
                <CauseBox key={i} $x={c.x} $y={c.y} $w={c.w} $h={c.h}>{c.label}</CauseBox>
              ))}
              <EffectLabel>EFFECT</EffectLabel>
            </Sheet>
          </Canvas>
          <ScrollTrack><ScrollThumb /></ScrollTrack>
        </CanvasRow>
      </Workspace>

      <IconStrip>
        <StripTop><ChevronsRight size={17} strokeWidth={1} /></StripTop>
        <StripBtn $active><FillStripIcon /></StripBtn>
        <StripBtn><GridStripIcon /></StripBtn>
        <StripBtn><Image size={20} strokeWidth={1.8} /></StripBtn>
        <StripBtn><Layers size={20} strokeWidth={1.8} /></StripBtn>
        <StripBtn><FileText size={20} strokeWidth={1.8} /></StripBtn>
        <StripBtn><PuzzleStripIcon /></StripBtn>
        <StripBtn><NetworkStripIcon /></StripBtn>
        <StripBtn><Presentation size={20} strokeWidth={1.8} /></StripBtn>
        <StripBtn><History size={20} strokeWidth={2} /></StripBtn>
      </IconStrip>

      <Props>
        <PropTabs>
          <PropTab $w={95} $active>Relleno</PropTab>
          <PropTab $w={92} $first>Línea</PropTab>
          <PropTab $w={72} $pl={25}>Sombra</PropTab>
        </PropTabs>
        <FillList>
          {fillOptions.map((o, i) => (
            <FillOption key={o}><Radio $on={i === 1} />{o}</FillOption>
          ))}
        </FillList>
        <FieldRow $h={23} $mt={14}>Color:<ColorWell /></FieldRow>
        <FieldRow $h={20} $mt={15}>Sombra/Tinte:</FieldRow>
        <FieldRow $h={24} $mt={9}>
          <SliderTrack>
            <SliderFill $at={71} />
            <SliderThumb $at={71} />
          </SliderTrack>
          <PercentBox>0 %<Spinner><SpinUp /><SpinDown /></Spinner></PercentBox>
        </FieldRow>
        <FieldRow $h={20} $mt={15}>Transparencia:</FieldRow>
        <FieldRow $h={24} $mt={10}>
          <SliderTrack>
            <SliderThumb $at={6} />
          </SliderTrack>
          <PercentBox>0 %<Spinner><SpinUp /><SpinDown /></Spinner></PercentBox>
        </FieldRow>
      </Props>
    </Body>

    <Annotation viewBox="0 0 311 662">
      <ellipse cx="155" cy="330" rx="150" ry="325" fill="none" stroke="#d3202f" strokeWidth="1.6" />
    </Annotation>
  </Shell>
);

export default App;
